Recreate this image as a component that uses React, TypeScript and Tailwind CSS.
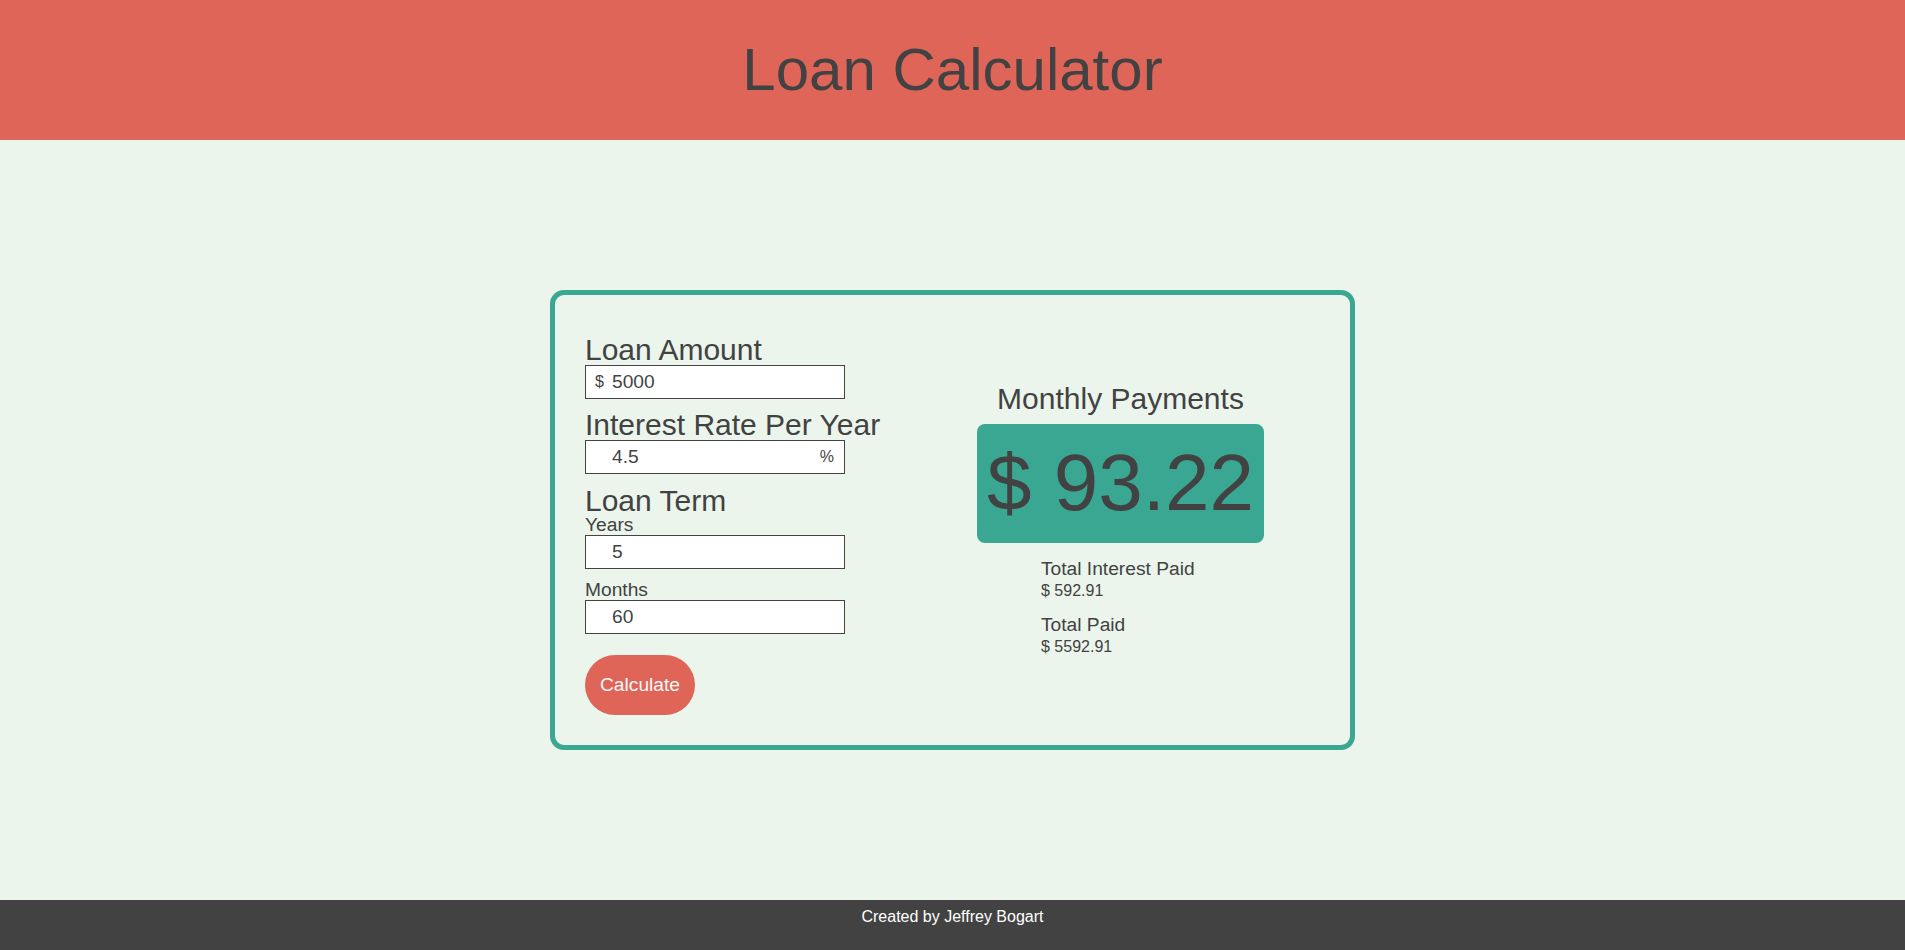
import { useState } from "react";

const font = "font-['Liberation_Sans',Arial,sans-serif]";

function Field({
  value,
  onChange,
  prefix,
  suffix,
}: {
  value: string;
  onChange: (v: string) => void;
  prefix?: string;
  suffix?: string;
}) {
  return (
    <div className="flex h-[34px] w-[260px] items-center border border-[#444] bg-white">
      <span className="w-[26px] shrink-0 pl-[9px] text-[16px] text-[#444]">
        {prefix}
      </span>
      <input
        value={value}
        onChange={(e) => onChange(e.target.value)}
        className="h-full min-w-0 flex-1 bg-transparent text-[19.2px] text-[#444] outline-none"
      />
      {suffix && (
        <span className="shrink-0 pr-[10px] text-[16px] text-[#444]">
          {suffix}
        </span>
      )}
    </div>
  );
}

export default function App() {
  const [amount, setAmount] = useState("5000");
  const [rate, setRate] = useState("4.5");
  const [years, setYears] = useState("5");
  const [months, setMonths] = useState("60");
  const [result, setResult] = useState({
    monthly: "93.22",
    interest: "592.91",
    total: "5592.91",
  });

  const calculate = () => {
    const p = parseFloat(amount);
    const r = parseFloat(rate) / 1200;
    const n = parseFloat(months);
    if (!p || !n) return;
    const m = r ? (p * r) / (1 - Math.pow(1 + r, -n)) : p / n;
    setResult({
      monthly: m.toFixed(2),
      interest: (m * n - p).toFixed(2),
      total: (m * n).toFixed(2),
    });
  };

  return (
    <div className={`flex min-h-screen flex-col bg-[#ebf5ec] text-[#424242] ${font}`}>
      <header className="flex h-[140px] shrink-0 items-center justify-center bg-[#e06559]">
        <h1 className="text-[60px] font-normal leading-[68px]">Loan Calculator</h1>
      </header>

      <main className="flex flex-1 items-center justify-center">
        <div className="flex w-[805px] items-center rounded-[14px] border-[5px] border-[#3aa792] pb-[30px] pl-[30px] pt-[39px]">
          <div className="flex w-[260px] flex-col items-start">
            <h2 className="whitespace-nowrap text-[30px] leading-[31px]">Loan Amount</h2>
            <Field value={amount} onChange={setAmount} prefix="$" />

            <h2 className="mt-[10px] whitespace-nowrap text-[30px] leading-[31px]">
              Interest Rate Per Year
            </h2>
            <Field value={rate} onChange={setRate} suffix="%" />

            <h2 className="mt-[12px] whitespace-nowrap text-[30px] leading-[29px]">
              Loan Term
            </h2>
            <p className="text-[19.2px] leading-[20px]">Years</p>
            <Field
              value={years}
              onChange={(v) => {
                setYears(v);
                const y = parseFloat(v);
                if (!isNaN(y)) setMonths(String(Math.round(y * 12)));
              }}
            />

            <p className="mt-[11px] text-[19.2px] leading-[20px]">Months</p>
            <Field
              value={months}
              onChange={(v) => {
                setMonths(v);
                const mo = parseFloat(v);
                if (!isNaN(mo)) setYears(String(+(mo / 12).toFixed(2)));
              }}
            />

            <button
              onClick={calculate}
              className="mt-[21px] h-[60px] w-[110px] rounded-full bg-[#e06559] text-[19.2px] text-[#f7f7f7]"
            >
              Calculate
            </button>
          </div>

          <div className="mb-[12px] ml-[132px] flex w-[287px] flex-col items-center">
            <h2 className="whitespace-nowrap text-[30px] leading-[34px]">Monthly Payments</h2>
            <div className="mt-[8px] flex h-[119px] w-[287px] items-center justify-center rounded-[8px] bg-[#39a792]">
              <span className="whitespace-nowrap text-[80px] leading-[92px]">
                $ {result.monthly}
              </span>
            </div>
            <div className="mt-[15px] self-start pl-[64px]">
              <p className="text-[19.2px] leading-[22px]">Total Interest Paid</p>
              <p className="mt-[2px] text-[16px] leading-[18px]">$ {result.interest}</p>
              <p className="mt-[14px] text-[19.2px] leading-[22px]">Total Paid</p>
              <p className="mt-[2px] text-[16px] leading-[18px]">$ {result.total}</p>
            </div>
          </div>
        </div>
      </main>

      <footer className="h-[50px] shrink-0 bg-[#424242] pt-[8px] text-center text-[16px] leading-[18px] text-white">
        Created by Jeffrey Bogart
      </footer>
    </div>
  );
}
